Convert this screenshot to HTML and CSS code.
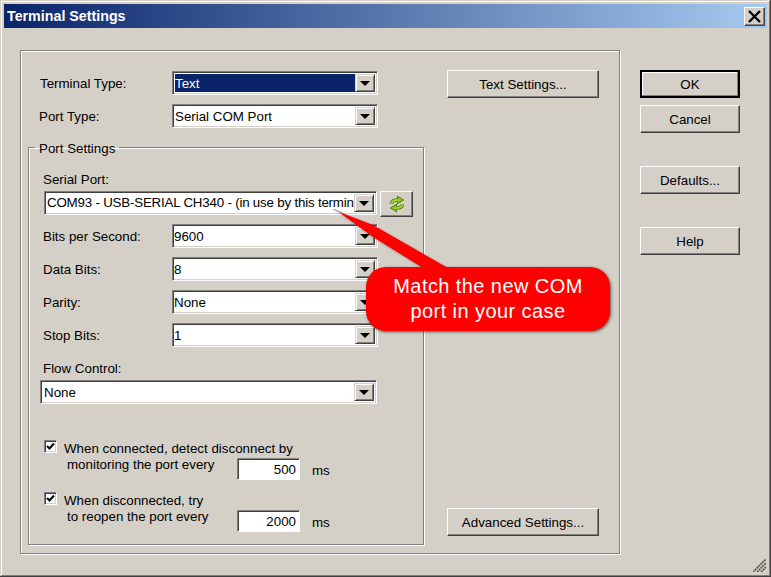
FILE: index.html
```html
<!DOCTYPE html>
<html lang="en">
<head>
<meta charset="utf-8">
<title>Terminal Settings</title>
<link rel="stylesheet" href="styles.css">
</head>
<body>
<div class="dialog">
  <div class="titlebar">
    <span class="title">Terminal Settings</span>
    <button class="close" aria-label="Close"><svg width="15" height="13" viewBox="0 0 15 13"><path d="M2 1L13 12M13 1L2 12" stroke="#000" stroke-width="2.4" fill="none"/></svg></button>
  </div>
  <div class="content">
    <div class="panel">
      <div class="left">
        <div class="row first"><span class="label">Terminal Type:</span>
          <div class="combo w-short"><span class="value selected">Text</span><span class="arrow"></span></div></div>
        <div class="row second"><span class="label">Port Type:</span>
          <div class="combo w-short"><span class="value">Serial COM Port</span><span class="arrow"></span></div></div>
        <fieldset class="group">
          <legend>Port Settings</legend>
          <div class="cap serial-cap">Serial Port:</div>
          <div class="serial-row">
            <div class="combo w-serial"><span class="value">COM93 - USB-SERIAL CH340 - (in use by this terminal)</span><span class="arrow"></span></div>
            <button class="btn refresh" aria-label="Refresh"><svg width="18" height="18" viewBox="0 0 18 18"><g fill="none" stroke="#4f7d10" stroke-width="3.6"><path d="M3.5 9C3.5 6 6 5 10 5"/><path d="M14.5 9C14.5 12 12 13 8 13"/></g><path d="M9.5 1.2L15.5 5L9.5 8.8Z" fill="#8cc21e" stroke="#4f7d10"/><path d="M8.5 9.2L2.5 13L8.5 16.8Z" fill="#8cc21e" stroke="#4f7d10"/><g fill="none" stroke="#9fd22a" stroke-width="2"><path d="M3.5 9C3.5 6 6 5 10.5 5"/><path d="M14.5 9C14.5 12 12 13 7.5 13"/></g></svg></button>
          </div>
          <div class="row field bits"><span class="label">Bits per Second:</span>
            <div class="combo w-short"><span class="value">9600</span><span class="arrow"></span></div></div>
          <div class="row field"><span class="label">Data Bits:</span>
            <div class="combo w-short"><span class="value">8</span><span class="arrow"></span></div></div>
          <div class="row field"><span class="label">Parity:</span>
            <div class="combo w-short"><span class="value">None</span><span class="arrow"></span></div></div>
          <div class="row field"><span class="label">Stop Bits:</span>
            <div class="combo w-short"><span class="value">1</span><span class="arrow"></span></div></div>
          <div class="cap flow-cap">Flow Control:</div>
          <div class="combo w-flow"><span class="value">None</span><span class="arrow"></span></div>
          <div class="option opt-one">
            <span class="check"><svg width="9" height="9" viewBox="0 0 9 9"><path d="M1 4L3.5 6.5L8 1.5" stroke="#000" stroke-width="2" fill="none"/></svg></span>
            <div class="option-text"><div>When connected, detect disconnect by</div><div class="indent">monitoring the port every</div></div>
            <span class="num">500</span><span class="unit">ms</span>
          </div>
          <div class="option opt-two">
            <span class="check"><svg width="9" height="9" viewBox="0 0 9 9"><path d="M1 4L3.5 6.5L8 1.5" stroke="#000" stroke-width="2" fill="none"/></svg></span>
            <div class="option-text"><div>When disconnected, try</div><div class="indent">to reopen the port every</div></div>
            <span class="num">2000</span><span class="unit">ms</span>
          </div>
        </fieldset>
      </div>
      <div class="mid">
        <button class="btn wide">Text Settings...</button>
        <button class="btn wide">Advanced Settings...</button>
      </div>
    </div>
    <div class="actions">
      <button class="btn action default">OK</button>
      <button class="btn action">Cancel</button>
      <button class="btn action gap-a">Defaults...</button>
      <button class="btn action gap-b">Help</button>
    </div>
  </div>
  <svg class="grip" width="14" height="14" viewBox="0 0 14 14"><path d="M0 14L13 1M4 14L13 5M8 14L13 9" stroke="#555" stroke-width="1.7" fill="none" stroke-dasharray="2 .6"/></svg>
  <div class="callout">
    <svg class="pointer" width="130" height="70" viewBox="0 0 130 70"><path d="M5 2.5L40 16L115 59H90L40 28Z" fill="#f00"/><path d="M0 0L9 4" stroke="#999" stroke-width="1"/></svg>
    <div class="bubble">Match the new COM<br>port in your case</div>
  </div>
</div>
</body>
</html>
```
FILE: styles.css
```css
* { box-sizing: border-box; }
html, body { margin: 0; padding: 0; }
body { width: 771px; height: 577px; overflow: hidden; font: 13.33px/15px "Liberation Sans", Arial, sans-serif; color: #000; }
.dialog {
  position: relative; width: 771px; height: 577px; padding: 4px; background: #d4d0c8;
  box-shadow: inset -1px -1px #404040, inset 1px 1px #d4d0c8, inset -2px -2px #808080, inset 2px 2px #fff;
}
.titlebar {
  height: 24px; padding: 0 2px 0 3px; display: flex; align-items: center; justify-content: space-between;
  background: linear-gradient(90deg, #0a246a, #a6caf0);
}
.title { color: #fff; font-weight: 700; font-size: 14.25px; }
.close {
  width: 21px; height: 19px; padding: 0; display: flex; align-items: center; justify-content: center; background: #d4d0c8;
  border: 1px solid; border-color: #fff #404040 #404040 #fff; box-shadow: inset -1px -1px #808080;
}
.content { display: flex; padding: 22px 0 0 16px; }
.panel {
  width: 600px; height: 504px; display: flex; border: 1px solid #808080;
  box-shadow: inset 1px 1px #fff, 1px 1px #fff;
}
.left { width: 403px; padding: 20px 0 0 7px; }
.row { display: flex; align-items: center; }
.label { width: 144px; padding-left: 12px; flex: none; }
.second { margin-top: 9px; }
.second .label { padding-left: 11px; }
.combo {
  display: flex; align-items: center; height: 24px; padding: 2px; background: #fff;
  border: 1px solid; border-color: #808080 #fff #fff #808080; box-shadow: inset 1px 1px #404040, inset -1px -1px #d4d0c8;
}
.w-short { width: 206px; }
.w-serial { width: 333px; }
.w-flow { width: 337px; }
.value { flex: 1; min-width: 0; height: 18px; padding-top: 1px; line-height: 18px; white-space: nowrap; overflow: hidden; }
.selected { background: #0a246a; color: #fff; }
.arrow {
  flex: none; position: relative; width: 20px; height: 18px; background: #d4d0c8;
  border: 1px solid; border-color: #d4d0c8 #404040 #404040 #d4d0c8; box-shadow: inset 1px 1px #fff, inset -1px -1px #808080;
}
.arrow::after {
  content: ""; position: absolute; left: 4px; top: 6px;
  border-style: solid; border-width: 5px 5px 0; border-color: #000 transparent transparent;
}
.group {
  width: 396px; height: 408px; margin: 9px 0 0; padding: 0 0 0 11px; min-width: 0;
  border: 1px solid #808080; box-shadow: inset 1px 1px #fff, 1px 1px #fff;
}
.group legend { margin-left: -5px; padding: 4px 4px 0; line-height: 16px; }
.cap { padding-left: 3px; }
.serial-cap { margin-top: 15px; }
.serial-row { display: flex; align-items: flex-start; gap: 3px; margin: 4px 0 0 4px; }
.serial-row .value { letter-spacing: -.2px; padding-top: 0; }
.btn {
  padding: 0; font: inherit; color: #000; background: #d4d0c8; border: 1px solid;
  border-color: #fff #404040 #404040 #fff; box-shadow: inset -1px -1px #808080;
}
.refresh { width: 33px; height: 26px; display: flex; align-items: center; justify-content: center; }
.field { margin-top: 9px; margin-left: 3px; }
.field .label { width: 129px; padding-left: 0; }
.field .value { margin-left: -1px; }
.bits { margin-top: 7px; }
.field + .field { margin-top: 9px; }
.flow-cap { margin-top: 14px; }
.w-flow { margin-top: 4px; }
.w-flow .value { padding-left: 1px; }
.option { display: flex; align-items: flex-start; position: relative; margin-left: 4px; }
.opt-one { margin-top: 36px; }
.opt-two { margin-top: 12px; }
.check {
  flex: none; width: 13px; height: 13px; background: #fff; display: flex; align-items: center; justify-content: center;
  border: 1px solid; border-color: #808080 #fff #fff #808080; box-shadow: inset 1px 1px #404040, inset -1px -1px #d4d0c8;
}
.option-text { width: 173px; margin-left: 7px; padding-top: 1px; line-height: 16px; white-space: nowrap; }
.indent { padding-left: 3px; }
.num {
  width: 63px; height: 22px; margin-top: 18px; padding: 1px 3px 0 0; background: #fff; text-align: right; line-height: 20px;
  border: 1px solid; border-color: #808080 #fff #fff #808080; box-shadow: inset 1px 1px #404040;
}
.unit { margin: 23px 0 0 12px; }
.mid { width: 152px; margin-left: 23px; padding: 19px 0 17px; display: flex; flex-direction: column; justify-content: space-between; }
.wide { height: 28px; }
.actions { display: flex; flex-direction: column; margin-left: 20px; padding-top: 20px; }
.action { width: 100px; height: 28px; }
.action + .action { margin-top: 7px; }
.default { border: 2px solid #000; box-shadow: inset -1px -1px #808080, inset 1px 1px #fff; }
.action.gap-a { margin-top: 33px; }
.action.gap-b { margin-top: 33px; }
.grip { position: absolute; right: 4px; bottom: 5px; }
.callout { position: absolute; left: 333px; top: 209px; width: 278px; height: 123px; }
.pointer { position: absolute; left: 0; top: 0; filter: drop-shadow(1px 1px 1px rgba(0,0,0,.35)); }
.bubble {
  position: absolute; left: 33px; top: 58px; width: 244px; height: 64px; border-radius: 20px; background: #f00; color: #fff;
  font-size: 20px; line-height: 25px; letter-spacing: .42px; text-align: center; padding-top: 7px;
  box-shadow: 1px 1px 3px rgba(0,0,0,.6);
}
```
